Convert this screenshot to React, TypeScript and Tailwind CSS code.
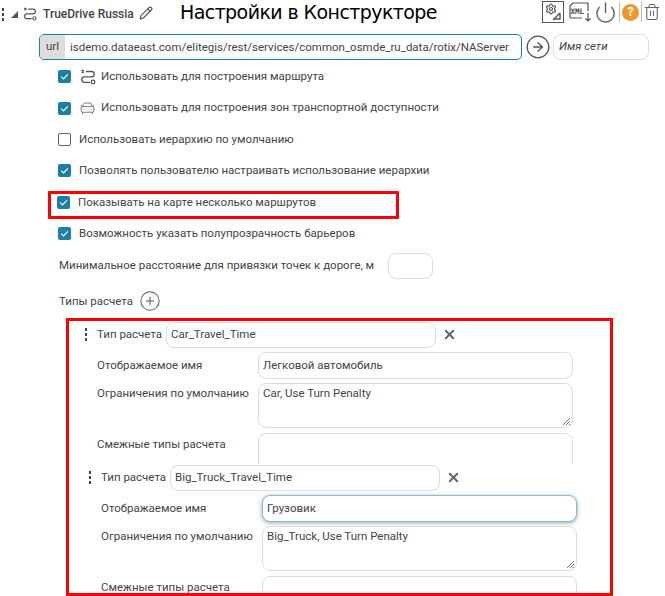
import { CarFront, CircleArrowRight, CirclePlus, Pencil, Power, Settings, Trash2, X } from "lucide-react";

const font = "font-['Roboto',sans-serif]";

const Check = ({ checked = true }: { checked?: boolean }) =>
  checked ? (
    <span className="flex h-[13px] w-[13px] shrink-0 items-center justify-center rounded-[2px] bg-[#1b7fa6]">
      <svg viewBox="0 0 12 12" className="h-[11px] w-[11px]" fill="none" stroke="#fff" strokeWidth="1.3">
        <path d="M2.5 6.2 5 8.6 9.6 3.6" />
      </svg>
    </span>
  ) : (
    <span className="h-[13px] w-[13px] shrink-0 rounded-[2px] border border-[#666] bg-white" />
  );

const RouteIcon = ({ className }: { className: string }) => (
  <svg viewBox="0 0 16 16" className={className} fill="none" stroke="#555" strokeWidth="1.3">
    <path d="M1.5 1 4 3.5M4 1 1.5 3.5" />
    <path d="M6 2.5h5.5a2.7 2.7 0 0 1 0 5.4h-7a2.7 2.7 0 0 0 0 5.4H10" />
    <circle cx="13" cy="13" r="1.8" />
  </svg>
);

const CheckRow = ({
  label,
  checked,
  icon,
  indent = "pl-[58px]",
}: {
  label: string;
  checked?: boolean;
  icon?: React.ReactNode;
  indent?: string;
}) => (
  <div className={`flex h-[31.4px] items-center whitespace-nowrap text-[11.5px] text-[#444] ${indent}`}>
    <Check checked={checked} />
    {icon && <span className="ml-[8px] flex w-[17px] justify-center">{icon}</span>}
    <span className={icon ? "ml-[5px]" : "ml-2"}>{label}</span>
  </div>
);

const Dots = () => (
  <span className="flex w-[3px] shrink-0 flex-col gap-[2px]">
    <i className="h-[3px] w-[2px] bg-[#444]" />
    <i className="h-[3px] w-[2px] bg-[#444]" />
    <i className="h-[3px] w-[2px] bg-[#444]" />
  </span>
);

const Resize = () => (
  <svg viewBox="0 0 9 9" className="absolute bottom-[1px] right-[1px] h-[9px] w-[9px]" stroke="#555" strokeWidth="0.8">
    <path d="M1 8 8 1M4 8 8 4M7 8 8 7" />
  </svg>
);

const fieldCls = "rounded-[8px] border border-[#ddd] bg-white text-[11.5px] text-[#444]";
const labelCls = "shrink-0 whitespace-nowrap text-[11.5px] text-[#444]";

const CalcType = ({
  name,
  title,
  limits,
  focused,
  className,
}: {
  name: string;
  title: string;
  limits: string;
  focused?: boolean;
  className: string;
}) => (
  <div className={`flex flex-col overflow-hidden ${className}`}>
    <div className="flex h-[27px] shrink-0 items-center">
      <span className="ml-[19px] mr-[9px]">
        <Dots />
      </span>
      <span className={`${labelCls} w-[69px]`}>Тип расчета</span>
      <div className={`${fieldCls} flex h-[26px] w-[270px] items-center px-[4px]`}>{name}</div>
      <X className="ml-[6px] h-[15px] w-[15px] text-[#5f6670]" strokeWidth={3} />
    </div>
    <div className="mt-[4px] flex h-[27px] shrink-0 items-center pl-[31px]">
      <span className={`${labelCls} w-[161px]`}>Отображаемое имя</span>
      <div
        className={`flex h-[27px] w-[315px] items-center rounded-[8px] border bg-white px-[4px] text-[11.5px] text-[#444] ${
          focused ? "border-[#8fb8c9] shadow-[0_1px_4px_rgba(60,110,135,0.6)]" : "border-[#ddd]"
        }`}
      >
        {title}
      </div>
    </div>
    <div className="mt-[4px] flex shrink-0 pl-[31px]">
      <span className={`${labelCls} w-[161px] pt-[2px]`}>Ограничения по умолчанию</span>
      <div className={`${fieldCls} relative h-[45px] w-[315px] px-[4px] pt-[1px]`}>
        {limits}
        <Resize />
      </div>
    </div>
    <div className="mt-[5px] flex shrink-0 pl-[31px]">
      <span className={`${labelCls} w-[161px] pt-[3px]`}>Смежные типы расчета</span>
      <div className={`${fieldCls} h-[45px] w-[315px]`} />
    </div>
  </div>
);

export default function App() {
  return (
    <div className={`relative h-[596px] w-[665px] overflow-hidden bg-white ${font}`}>
      {/* header */}
      <div className="flex h-[24px] items-center">
        <span className="ml-[2px] mt-[4px]">
          <Dots />
        </span>
        <svg viewBox="0 0 8 8" className="ml-[5px] mt-[4px] h-[8px] w-[8px]">
          <path d="M8 1v7H1z" fill="#555" />
        </svg>
        <RouteIcon className="ml-[5px] mt-[3px] h-[14px] w-[14px]" />
        <span className="ml-[6px] mt-[3px] w-[90px] whitespace-nowrap text-[12px] font-medium text-[#444]">
          TrueDrive Russia
        </span>
        <Pencil className="ml-[6px] mt-[2px] h-[14px] w-[14px] text-[#555]" />
        <h1 className="ml-[27px] whitespace-nowrap font-['DejaVu_Sans',sans-serif] text-[19px] leading-none tracking-[-0.58px] text-black">
          Настройки в Конструкторе
        </h1>
        <div className="ml-auto mr-[4px] flex items-center">
          <span className="relative h-[22px] w-[22px] border border-[#555]">
            <Settings className="absolute left-[2px] top-[1px] h-[12px] w-[12px] text-[#555]" strokeWidth={2.4} />
            <svg viewBox="0 0 20 20" className="h-[20px] w-[20px]" fill="none" stroke="#555" strokeWidth="1.4">
              <path d="M11 17h6v-6M10 18l7-7" />
            </svg>
          </span>
          <svg viewBox="0 0 25 22" className="ml-[3px] h-[22px] w-[25px]" fill="none" stroke="#555">
            <path d="M6 2h15v8M15 17H4a1 1 0 0 1-1-1V5l3-3" strokeWidth="1.2" />
            <path d="M21 12v8M18.5 17.5 21 20l2.5-2.5" strokeWidth="1.2" />
            <text x="3.5" y="13" fontSize="7.5" fontWeight="700" fontFamily="DejaVu Sans Mono" fill="#444" stroke="none">
              XML
            </text>
          </svg>
          <Power className="ml-[2px] h-[23px] w-[23px] text-[#666]" strokeWidth={1.5} />
          <span className="ml-[2px] h-[20px] w-px bg-[#bbb]" />
          <span className="ml-[2px] flex h-[17px] w-[17px] items-center justify-center rounded-full bg-[#f0962a] text-[13px] font-bold text-white">
            ?
          </span>
          <span className="ml-[2px] h-[20px] w-px bg-[#bbb]" />
          <Trash2 className="ml-[1px] h-[20px] w-[18px] text-[#666]" strokeWidth={1.4} />
        </div>
      </div>

      {/* url */}
      <div className="mt-[10px] flex h-[26px] items-center">
        <div className="ml-[39px] flex h-[26px] w-[483px] overflow-hidden rounded-[5px] border border-[#1b7fa6] text-[11.5px] text-[#444]">
          <span className="flex w-[25px] items-center justify-center bg-[#ddd]">url</span>
          <span className="flex-1 whitespace-nowrap pl-[5px] leading-[24px]">
            isdemo.dataeast.com/elitegis/rest/services/common_osmde_ru_data/rotix/NAServer
          </span>
        </div>
        <CircleArrowRight className="ml-[3px] h-[26px] w-[26px] text-[#555]" strokeWidth={1.2} />
        <div className={`${fieldCls} ml-[2px] flex h-[26px] w-[96px] items-center px-[5px] italic text-[#8a8a8a]`}>
          Имя сети
        </div>
      </div>

      {/* options */}
      <div className="mt-[1px]">
        <CheckRow label="Использовать для построения маршрута" icon={<RouteIcon className="h-[16px] w-[16px]" />} />
        <CheckRow
          label="Использовать для построения зон транспортной доступности"
          icon={<CarFront className="h-[18px] w-[18px] text-[#666]" strokeWidth={1.2} />}
        />
        <CheckRow label="Использовать иерархию по умолчанию" checked={false} />
        <CheckRow label="Позволять пользователю настраивать использование иерархии" />
        <CheckRow label="Показывать на карте несколько маршрутов" indent="pl-[57px]" />
        <CheckRow label="Возможность указать полупрозрачность барьеров" />
      </div>

      <div className="mt-[3px] flex h-[27px] items-center whitespace-nowrap pl-[59px] text-[11.5px] text-[#444]">
        <span className="w-[329px]">Минимальное расстояние для привязки точек к дороге, м</span>
        <div className={`${fieldCls} h-[26px] w-[45px]`} />
      </div>
      <div className="mt-[9px] flex h-[26px] items-center pl-[59px] text-[11.5px] text-[#444]">
        Типы расчета
        <CirclePlus className="ml-[6px] h-[22px] w-[22px] text-[#555]" strokeWidth={1.1} />
      </div>

      {/* calc types */}
      <div className="mt-[7px] pl-[66px]">
        <CalcType name="Car_Travel_Time" title="Легковой автомобиль" limits="Car, Use Turn Penalty" className="h-[143px]" />
        <CalcType
          name="Big_Truck_Travel_Time"
          title="Грузовик"
          limits="Big_Truck, Use Turn Penalty"
          focused
          className="ml-[4px] h-[140px]"
        />
      </div>

      {/* red annotation frames */}
      <div className="absolute left-[48px] top-[191px] h-[28px] w-[351px] rounded-[1px] border-[3px] border-[#f00]" />
      <div className="absolute left-[66px] top-[318px] h-[278px] w-[547px] border-[3px] border-[#f00]" />
    </div>
  );
}
